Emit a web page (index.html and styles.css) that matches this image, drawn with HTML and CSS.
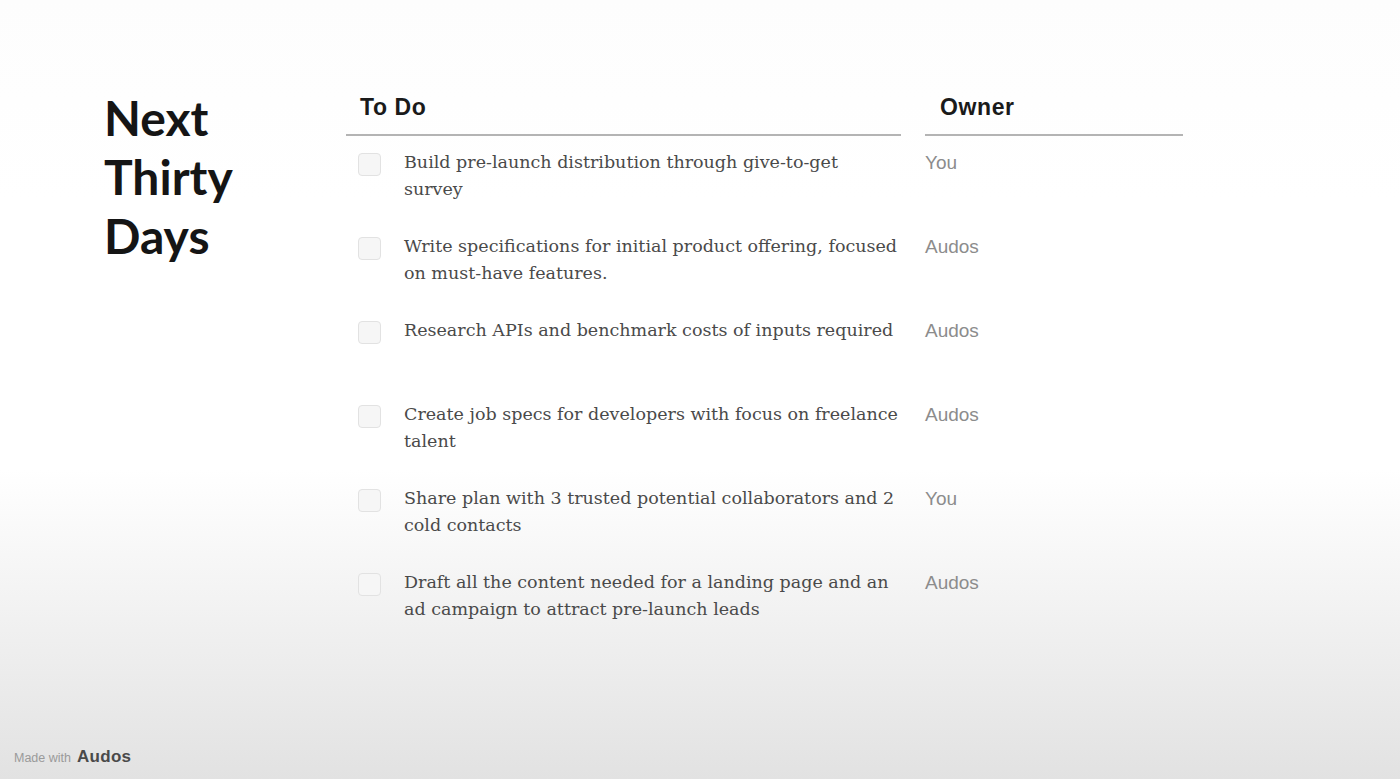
FILE: index.html
```html
<!DOCTYPE html>
<html lang="en">
<head>
<meta charset="utf-8">
<title>Next Thirty Days</title>
<link rel="stylesheet" href="styles.css">
</head>
<body>
<div class="slide">
  <div class="main">
    <h1 class="title">Next<br>Thirty<br>Days</h1>
    <div class="table">
      <div class="head head-todo">To Do</div>
      <div class="head head-owner">Owner</div>

      <div class="task"><span class="box"></span><span class="text">Build pre-launch distribution through give-to-get survey</span></div>
      <div class="owner">You</div>

      <div class="task"><span class="box"></span><span class="text">Write specifications for initial product offering, focused on must-have features.</span></div>
      <div class="owner">Audos</div>

      <div class="task"><span class="box"></span><span class="text">Research APIs and benchmark costs of inputs required</span></div>
      <div class="owner">Audos</div>

      <div class="task"><span class="box"></span><span class="text">Create job specs for developers with focus on freelance talent</span></div>
      <div class="owner">Audos</div>

      <div class="task"><span class="box"></span><span class="text">Share plan with 3 trusted potential collaborators and 2 cold contacts</span></div>
      <div class="owner">You</div>

      <div class="task"><span class="box"></span><span class="text">Draft all the content needed for a landing page and an ad campaign to attract pre-launch leads</span></div>
      <div class="owner">Audos</div>
    </div>
  </div>
  <div class="footer"><span class="made">Made with</span><span class="brand">Audos</span></div>
</div>
</body>
</html>
```

FILE: styles.css
```css
html, body {
  margin: 0;
  padding: 0;
}
body {
  width: 1400px;
  height: 779px;
  overflow: hidden;
  background: linear-gradient(to bottom, #fdfdfd 0px, #ffffff 200px, #ffffff 470px, #f0f0f0 630px, #e2e2e2 779px);
}
.slide {
  position: relative;
  height: 779px;
  display: flex;
  flex-direction: column;
  justify-content: space-between;
}
.main {
  display: flex;
  align-items: flex-start;
  padding: 88px 0 0 104px;
}
.title {
  margin: 0;
  width: 242px;
  font-family: Lato, "Liberation Sans", sans-serif;
  font-weight: 700;
  font-size: 48px;
  line-height: 59px;
  color: #151515;
}
.table {
  margin-top: 4px;
  display: grid;
  grid-template-columns: 555px 258px;
  column-gap: 24px;
}
.head {
  font-family: "Liberation Sans", Arial, sans-serif;
  font-weight: 700;
  font-size: 23px;
  letter-spacing: 0.6px;
  line-height: 30px;
  color: #1a1a1a;
  padding-bottom: 12px;
  border-bottom: 2px solid #b4b4b4;
}
.head-todo { padding-left: 14px; }
.head-owner { padding-left: 15px; }
.task {
  height: 84px;
  box-sizing: border-box;
  padding: 13px 0 0 12px;
  display: flex;
  align-items: flex-start;
  gap: 23px;
}
.box {
  flex: none;
  width: 23px;
  height: 23px;
  margin-top: 4px;
  box-sizing: border-box;
  border: 1px solid #e2e2e2;
  border-radius: 4px;
  background: #f6f6f6;
}
.text {
  width: 496px;
  font-family: "DejaVu Serif", "Liberation Serif", serif;
  font-size: 17.5px;
  line-height: 27px;
  color: #4a4a4a;
}
.owner {
  padding-top: 13px;
  font-family: "Liberation Sans", Arial, sans-serif;
  font-size: 19px;
  line-height: 27px;
  color: #8c8c8c;
}
.footer {
  display: flex;
  align-items: baseline;
  gap: 6px;
  padding: 0 0 12px 14px;
  font-family: "Liberation Sans", Arial, sans-serif;
}
.made {
  font-size: 12.5px;
  color: #9a9a9a;
}
.brand {
  font-size: 17px;
  font-weight: 700;
  color: #4a4a4a;
  letter-spacing: 0.3px;
}
```
